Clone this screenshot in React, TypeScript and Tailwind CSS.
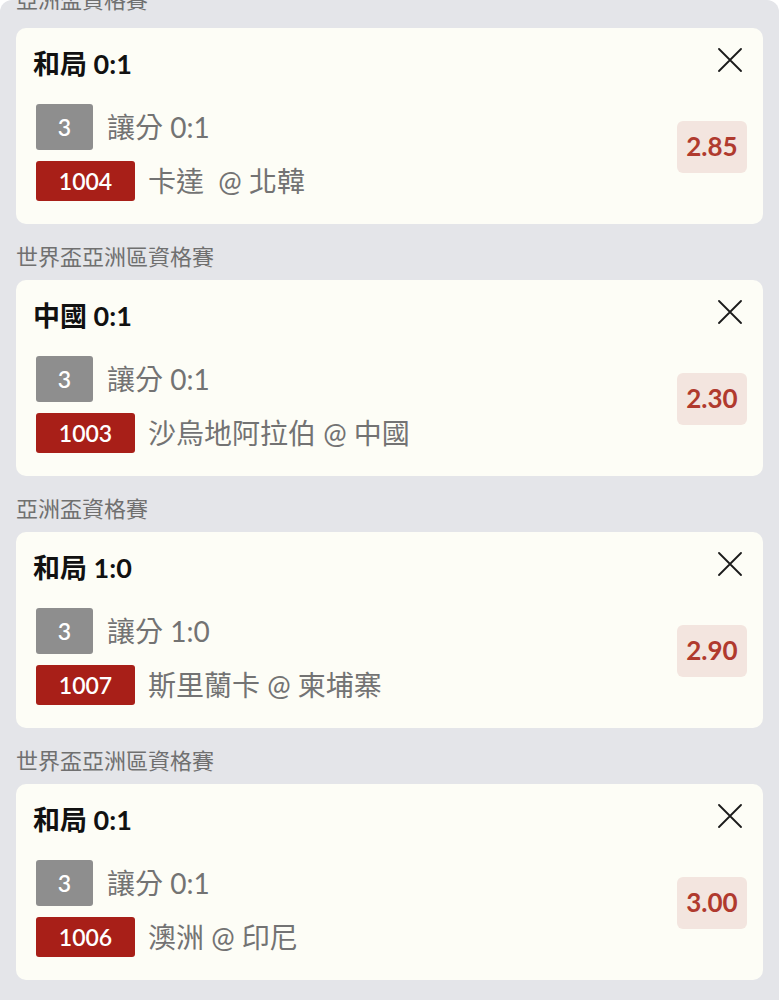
type Bet = {
  league: string;
  title: string;
  handicap: string;
  code: string;
  match: string;
  odds: string;
};

const bets: Bet[] = [
  { league: "亞洲盃資格賽", title: "和局 0:1", handicap: "讓分 0:1", code: "1004", match: "卡達  @ 北韓", odds: "2.85" },
  { league: "世界盃亞洲區資格賽", title: "中國 0:1", handicap: "讓分 0:1", code: "1003", match: "沙烏地阿拉伯 @ 中國", odds: "2.30" },
  { league: "亞洲盃資格賽", title: "和局 1:0", handicap: "讓分 1:0", code: "1007", match: "斯里蘭卡 @ 柬埔寨", odds: "2.90" },
  { league: "世界盃亞洲區資格賽", title: "和局 0:1", handicap: "讓分 0:1", code: "1006", match: "澳洲 @ 印尼", odds: "3.00" },
];

function CloseIcon() {
  return (
    <svg width="24" height="24" viewBox="0 0 24 24" fill="none" stroke="#1a1a1a" strokeWidth="1.8" strokeLinecap="round">
      <path d="M1 1L23 23M23 1L1 23" />
    </svg>
  );
}

function BetCard({ bet }: { bet: Bet }) {
  return (
    <div className="rounded-[10px] bg-[#fdfdf6] pl-5 pr-4 pt-5 pb-[23px]">
      {/* Title row */}
      <div className="flex items-start justify-between">
        <h3 className="text-[27px] leading-8 font-bold text-[#111] -ml-[3px]">{bet.title}</h3>
        <button className="mr-[5px]">
          <CloseIcon />
        </button>
      </div>

      {/* Selection + odds */}
      <div className="mt-6 flex items-center justify-between">
        <div className="flex flex-col gap-[11px]">
          <div className="flex items-center gap-[14px]">
            <span className="flex h-[46px] w-[57px] items-center justify-center rounded-[3px] bg-[#8e8e8e] text-[23px] font-semibold text-white">
              3
            </span>
            <span className="text-[28px] leading-8 text-[#737373]">{bet.handicap}</span>
          </div>
          <div className="flex items-center gap-[13px]">
            <span className="flex h-10 w-[99px] items-center justify-center rounded-[3px] bg-[#a81f18] text-[23px] font-semibold text-white">
              {bet.code}
            </span>
            <span className="whitespace-pre text-[28px] leading-8 text-[#737373]">{bet.match}</span>
          </div>
        </div>
        <div className="-mt-3 flex h-[52px] w-[70px] items-center justify-center rounded-md bg-[#f3e5df] text-[26px] font-bold text-[#b03a2e]">
          {bet.odds}
        </div>
      </div>
    </div>
  );
}

export default function App() {
  return (
    <div
      className="min-h-[1000px] bg-white"
      style={{ fontFamily: "Lato, 'Noto Sans CJK TC', sans-serif" }}
    >
      <div className="h-[1000px] overflow-hidden rounded-t-xl bg-[#e4e5e9] px-4">
        <div className="-mt-[15px] flex flex-col gap-[18px]">
          {bets.map((bet, i) => (
            <section key={i}>
              <p
                className={`h-[30px] text-[22px] leading-[30px] text-[#707070] ${i === 0 ? "mb-[13px]" : "mb-2"}`}
              >
                {bet.league}
              </p>
              <BetCard bet={bet} />
            </section>
          ))}
        </div>
      </div>
    </div>
  );
}
